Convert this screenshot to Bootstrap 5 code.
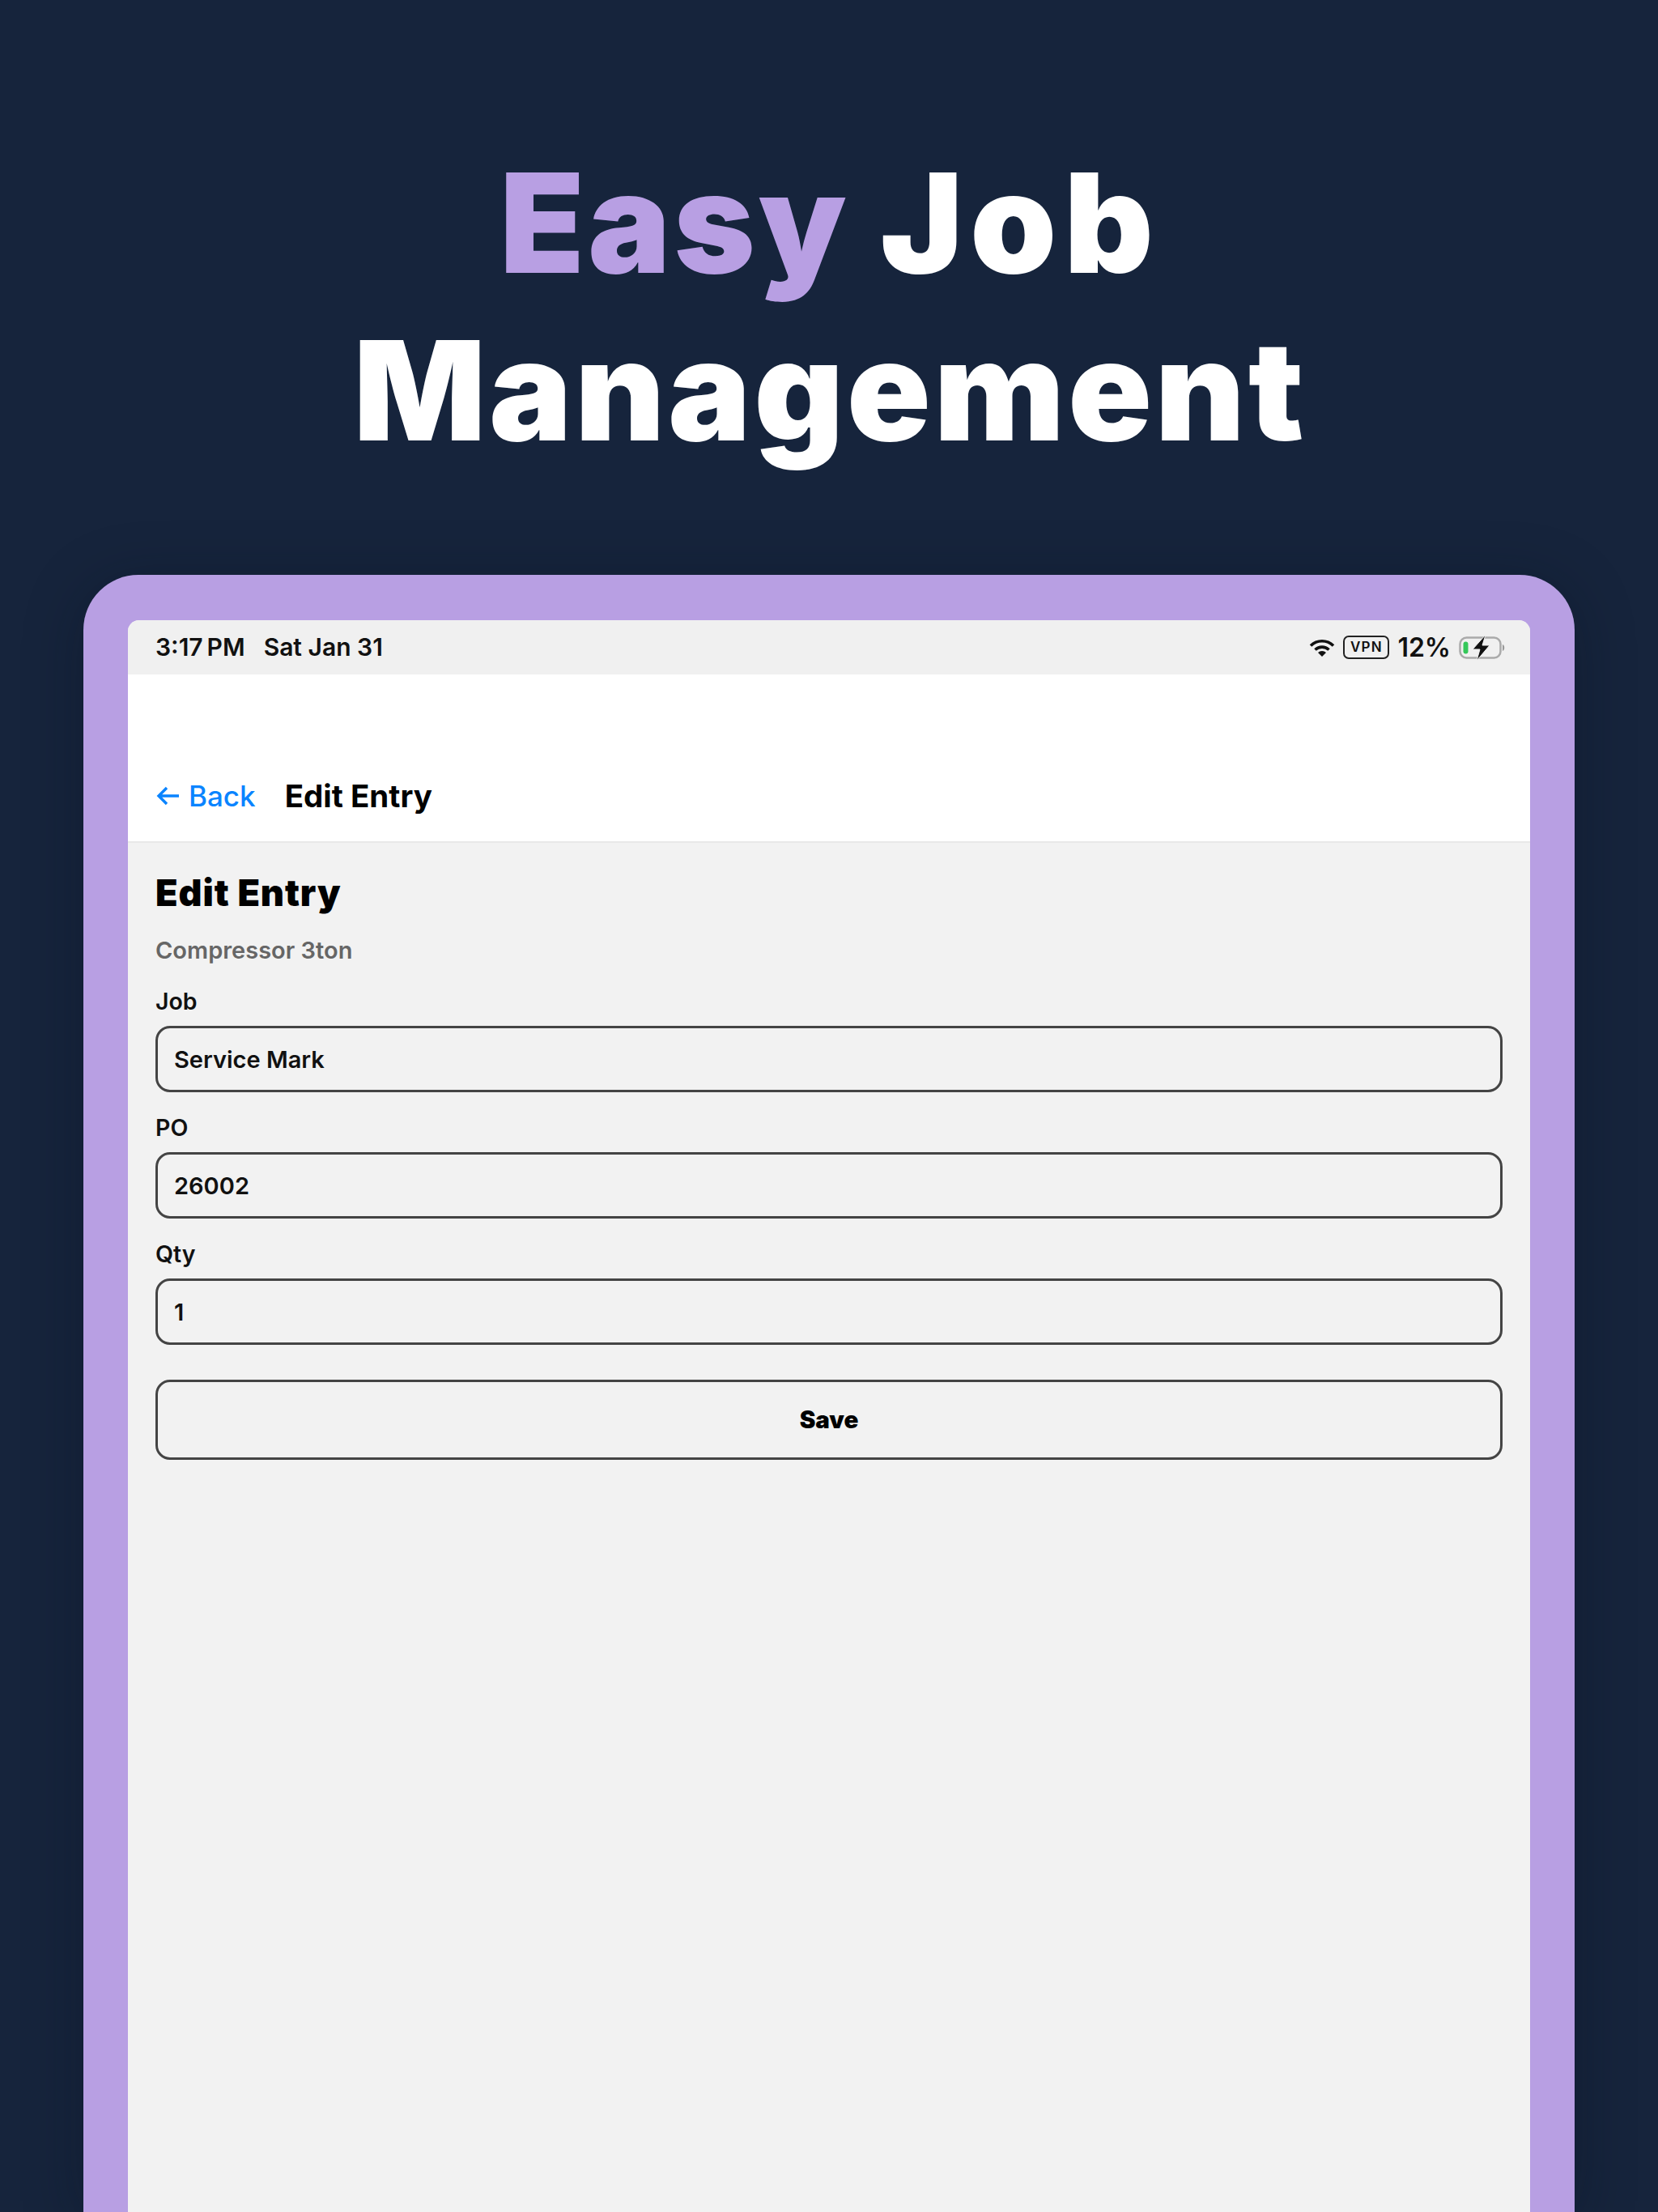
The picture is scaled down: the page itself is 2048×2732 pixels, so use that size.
<!DOCTYPE html>
<html lang="en">
<head>
<meta charset="utf-8">
<title>Easy Job Management</title>
<link href="https://cdn.jsdelivr.net/npm/bootstrap@5.3.0/dist/css/bootstrap.min.css" rel="stylesheet">
<style>
html,body{height:2732px;overflow:hidden;background:#16243c;}
body{font-family:Inter,"Liberation Sans",sans-serif;}
.shot{height:2732px;display:flex;flex-direction:column;padding:0 103px;}
.hero{height:710px;padding:171px 0 0 3px;text-align:center;margin:0;font-family:Inter,sans-serif;font-weight:900;font-size:171px;line-height:207px;color:#fff;letter-spacing:4px;}
.hero span{color:#b89fe3;}
.hero .jobword{color:#fff;letter-spacing:9px;}
.device{flex:1;background:#b89fe3;border-radius:68px 68px 0 0;padding:56px 55px 0;box-shadow:0 10px 70px rgba(8,16,32,.35);min-height:0;}
.screen{height:100%;background:#f2f2f2;border-radius:14px 14px 0 0;overflow:hidden;color:#000;}
.status{height:67px;background:#f0f0f0;padding:0 30px 0 34px;font-size:30px;font-weight:600;color:#111;}
.status .dt{margin-left:23px;}
.iconrow{gap:10px;}
.vpn{font-size:17px;font-weight:600;letter-spacing:1.2px;border:2.5px solid #222;border-radius:7px;height:29px;width:57px;line-height:24px;text-align:center;}
.pct{font-size:32px;font-weight:600;}
.topbar{height:208px;background:#fff;border-bottom:2px solid #e8e8e8;padding:0 34px 35px;gap:36px;}
.backlink{color:#0a84ff;font-size:35px;font-weight:500;text-decoration:none;line-height:42px;gap:11px;}
.topttl{font-size:38.5px;font-weight:700;line-height:42px;}
.body-pane{padding:36px 34px 0;}
.formhead{font-size:45px;font-weight:900;letter-spacing:.9px;line-height:52px;margin:0 0 27px;}
.subline{color:#666;font-size:29px;font-weight:600;line-height:36px;margin-bottom:28px;}
.fieldlabel{font-size:28.5px;font-weight:600;line-height:34px;margin-bottom:13px;color:#111;display:block;}
.form-control.fieldbox{height:82px;background:transparent;border:3px solid #444;border-radius:18px;padding:0 20px;font-size:29px;font-weight:600;color:#111;margin-bottom:27px;box-shadow:none;}
.btn.savebtn{height:99px;width:100%;border:3px solid #444;border-radius:18px;background:transparent;font-size:29.5px;font-weight:900;color:#000;margin-top:16px;}
</style>
</head>
<body>
<div class="shot">
  <h1 class="hero"><span>Easy</span> <span class="jobword">Job</span><br>Management</h1>
  <div class="device">
    <div class="screen">
      <div class="status d-flex align-items-center justify-content-between">
        <div><span>3:17&#8201;PM</span><span class="dt">Sat Jan 31</span></div>
        <div class="iconrow d-flex align-items-center">
          <svg width="32" height="24" viewBox="0 0 32 24"><path d="M2 9.500a20 20 0 0 1 28 0" fill="none" stroke="#111" stroke-width="3.600"/><path d="M7.500 14.500a12.500 12.500 0 0 1 17 0" fill="none" stroke="#111" stroke-width="3.600"/><path d="M16 23l-5-5a7 7 0 0 1 10 0z" fill="#111"/></svg>
          <div class="vpn">VPN</div>
          <div class="pct">12%</div>
          <svg width="58" height="32" viewBox="0 0 58 32"><rect x="1.500" y="3.500" width="50" height="25" rx="8" fill="none" stroke="#aaa" stroke-width="2.500"/><path d="M54 12c3 1 3 7 0 8z" fill="#999"/><rect x="5.500" y="8.500" width="6" height="15" rx="3" fill="#34c759"/><path d="M33 0L17 18h9l-4 14 16-19h-9z" fill="#111" stroke="#f0f0f0" stroke-width="1"/></svg>
        </div>
      </div>
      <div class="topbar d-flex align-items-end">
        <a class="backlink d-flex align-items-center" href="#"><svg width="30" height="28" viewBox="0 0 30 28"><path d="M14 4L4 14l10 10M4 14h25" fill="none" stroke="#0a84ff" stroke-width="3.400"/></svg>Back</a>
        <div class="topttl">Edit Entry</div>
      </div>
      <div class="body-pane">
        <h2 class="formhead">Edit Entry</h2>
        <div class="subline">Compressor 3ton</div>
        <form>
          <label class="fieldlabel" for="j">Job</label>
          <input id="j" class="form-control fieldbox" value="Service Mark">
          <label class="fieldlabel" for="p">PO</label>
          <input id="p" class="form-control fieldbox" value="26002">
          <label class="fieldlabel" for="q">Qty</label>
          <input id="q" class="form-control fieldbox" value="1">
          <button type="button" class="btn savebtn">Save</button>
        </form>
      </div>
    </div>
  </div>
</div>
<script src="https://cdn.jsdelivr.net/npm/bootstrap@5.3.0/dist/js/bootstrap.bundle.min.js"></script>
</body>
</html>
